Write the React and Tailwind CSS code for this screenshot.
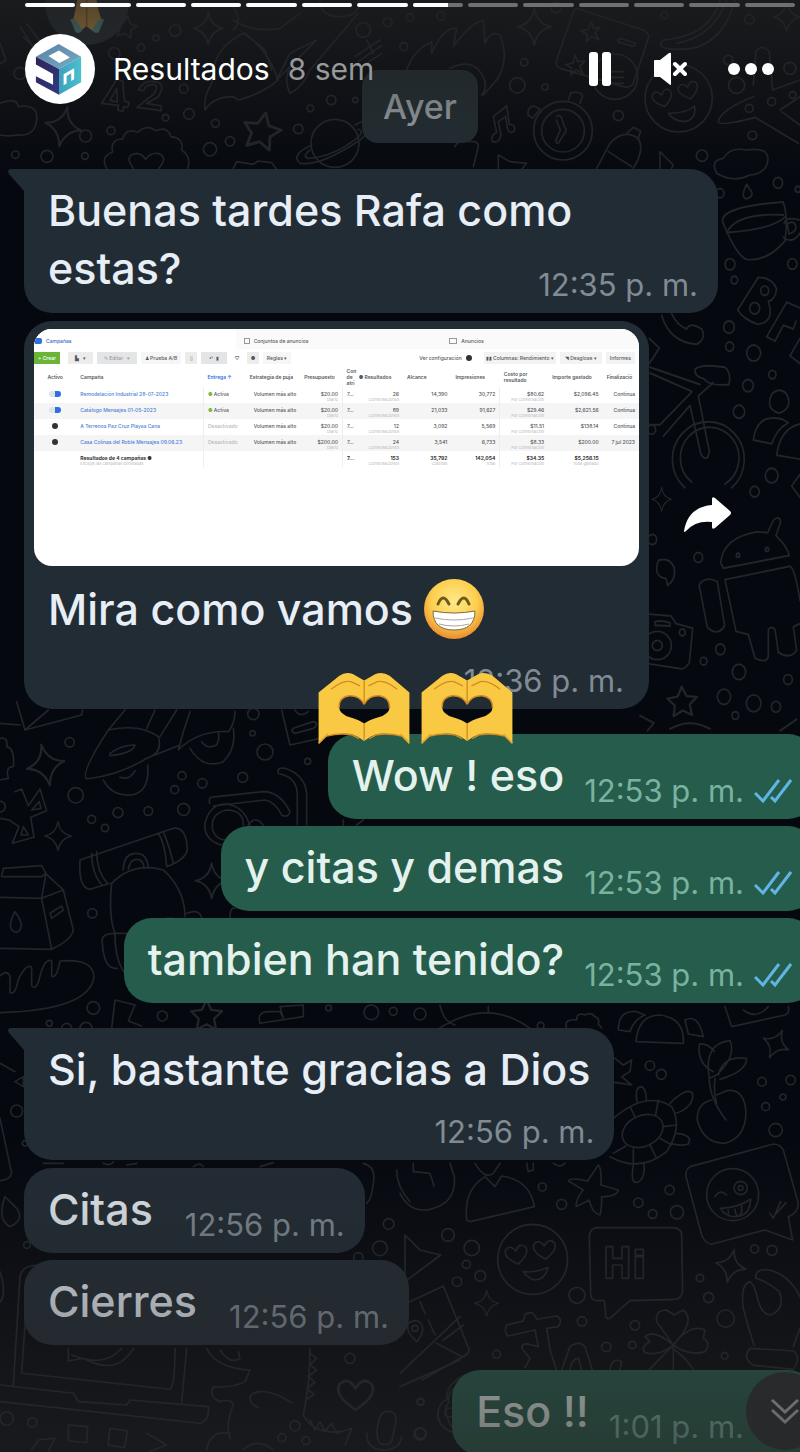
import { clsx } from 'clsx'

const segments = Array.from({ length: 14 }, (_, i) => (i < 7 ? 100 : i === 7 ? 70 : 0))

const columns = [
  { label: 'Activo', width: 'w-[7%]' },
  { label: 'Campaña', width: 'w-[21%]' },
  { label: 'Entrega ↑', width: 'w-[7%]' },
  { label: 'Estrategia de puja', width: 'w-[9%]' },
  { label: 'Presupuesto', width: 'w-[7%]' },
  { label: 'Con de atri', width: 'w-[2%]' },
  { label: '● Resultados', width: 'w-[8%]' },
  { label: 'Alcance', width: 'w-[8%]' },
  { label: 'Impresiones', width: 'w-[8%]' },
  { label: 'Costo por resultado', width: 'w-[8%]' },
  { label: 'Importe gastado', width: 'w-[9%]' },
  { label: 'Finalizació', width: 'w-[6%]' },
]

const campaigns = [
  { name: 'Remodelación Industrial 28-07-2023', on: true, budget: '$20.00', results: '26', reach: '14,390', views: '30,772', cost: '$80.62', spent: '$2,096.45', end: 'Continua' },
  { name: 'Catálogo Mensajes 01-05-2023', on: true, budget: '$20.00', results: '89', reach: '21,033', views: '91,627', cost: '$29.46', spent: '$2,621.56', end: 'Continua' },
  { name: 'A Terrenos Paz Cruz Playas Cana', on: false, budget: '$20.00', results: '12', reach: '3,092', views: '5,569', cost: '$11.51', spent: '$138.14', end: 'Continua' },
  { name: 'Casa Colinas del Roble Mensajes 09.06.23', on: false, budget: '$200.00', results: '24', reach: '3,541', views: '6,733', cost: '$8.33', spent: '$200.00', end: '7 jul 2023' },
]

const STAR5 = 'M0 -32 L10 -11 L33 -8 L16 8 L20 31 L0 20 L-21 31 L-17 8 L-33 -8 L-10 -11 Z'
const STAR4 = 'M0 -48 Q6 -8 44 0 Q8 8 0 48 Q-8 8 -44 0 Q-6 -8 0 -48 Z'
const HEART = 'M0 28 Q-42 0 -30 -20 Q-14 -36 0 -12 Q14 -36 30 -20 Q42 0 0 28 Z'

function Dots({ items }) {
  return items.map(([x, y, r]) => <circle key={`${x}-${y}`} cx={x} cy={y} r={r} />)
}

function Wallpaper() {
  return (
    <svg className="absolute inset-0 h-full w-full" viewBox="0 0 800 1452" preserveAspectRatio="xMidYMin slice" fill="none" stroke="#22252a" strokeLinejoin="round" strokeLinecap="round" aria-hidden="true">
      {/* top left: rocket, 42, planet, badge */}
      <g transform="scale(.3333)" strokeWidth="5">
        <Dots items={[[525, 92, 17], [468, 114, 9], [423, 143, 11], [343, 160, 17], [551, 266, 13], [567, 342, 16], [497, 353, 10], [646, 370, 12], [690, 424, 14], [630, 448, 20], [257, 408, 18], [333, 392, 12], [46, 464, 11], [141, 469, 18], [255, 468, 10], [895, 387, 14], [931, 325, 10], [994, 300, 14], [1066, 300, 8], [1090, 90, 22], [1163, 67, 13], [60, 220, 18]]} />
        <path d={STAR4} transform="translate(625 85)" />
        <path d={STAR4} transform="translate(190 380) rotate(12) scale(1.25)" />
        <path d={STAR5} transform="translate(786 392) rotate(12) scale(1.7)" />
        <path d={STAR5} transform="translate(378 80) rotate(10)" />
        <path d="M60 80l40 60M80 70l40 55M70 110l30 30M0 130l18 50-18 12M0 310q50-20 55 10q60-10 55 40t-60 45q-30 5-50 0" />
        <path d="M305 310l45-72 18 5 5 60 15 5-5 14-12-2-2 14-16-4 3-14zM330 302l22 4-2-40zM415 270q15-30 50-25t10 45l-35 20 45 8-2 14-72-10 50-40q20-30-5-28-20 0-25 18z" />
        <path d="M730 100Q650 140 640 210L635 250Q610 290 615 330Q640 290 700 290L715 300Q790 280 835 240Q800 140 730 100ZM700 60Q760 100 840 85L900 40M735 100l60 50 20 60M830 240l120-120-80 40-40 80M870 280Q850 240 870 200L945 125M870 280Q910 260 930 210L1075 40" />
        <circle cx="1005" cy="430" r="72" />
        <path d="M935 435Q870 465 900 490Q960 500 1080 420Q1130 380 1085 365L1065 375M930 450Q905 470 925 475Q1000 470 1070 415Q1095 395 1075 388" />
        <path d="M1065 170l75-50M1075 185l70-48M1085 200l60-40M1100 120l20 40" />
        <path d="M320 505q-20-35 18-48-8-40 30-40 10-35 45-20 28-25 55-5 35-15 45 18 40 5 32 40 30 20 18 55M400 505q-30-40 10-45 15 0 27 18 15-20 35-18 35 8 5 45M700 505l10-20 50 8 15-10 40 5 15 20" />
        <path d="M700 20q30 40 0 70M960 0q0 50 60 50t60-50" />
      </g>
      {/* top right: flames, cards, clock, smiley */}
      <g transform="translate(400 0) scale(.3333)" strokeWidth="5">
        <Dots items={[[30, 52, 11], [123, 48, 12], [11, 140, 12], [373, 187, 11], [352, 256, 23], [435, 261, 9], [655, 347, 15], [1057, 406, 13], [906, 467, 17], [1010, 256, 24], [1048, 325, 12], [1115, 305, 12], [1178, 285, 10], [793, 46, 10], [1048, 58, 14], [985, 180, 14], [468, 22, 16], [1170, 205, 18]]} />
        <path d={STAR4} transform="translate(403 80) scale(1.15)" />
        <path d={STAR4} transform="translate(1160 50) scale(.9)" />
        <path d="M20 210Q40 150 95 125L95 160Q130 80 170 85L160 140Q210 70 250 60L255 130Q270 90 300 105Q330 180 290 240L250 285M150 205q60-30 90 10 30 40 5 70" />
        <path d="M530 25L730 90Q750 100 745 115L700 250Q690 265 670 260L480 205Q465 198 470 180L520 35ZM575 65l5 20 20-3-15 17 12 20-22-10-15 15 2-22-20-10 22-3zM660 115l45 15q5 10-10 8l-40-12q-5-10 5-11zM525 165l8 20 22-2-16 17 10 20-20-10-16 14 2-20-18-10 22-5z" />
        <circle cx="645" cy="230" r="68" />
        <path d="M625 215h45M625 232h45M625 250h45M960 0Q930 110 790 120Q770 140 800 145Q960 170 1005 0M830 130Q940 110 980 0" />
        <circle cx="489" cy="392" r="88" />
        <circle cx="489" cy="392" r="64" />
        <path d="M470 350q10-10 15 5l8 25q10 10 0 20l-18 30q-10 0-6-12l12-28-12-30M505 300l8-22q30-5 35 10l-8 22M385 345q-5-20 15-28l20 10-22 28zM280 350l40-32 8 55q20 0 15 20-15 10-20-5l-6-38-22 15 8 40q-5 25-25 20-8-18 12-28z" />
        <circle cx="836" cy="295" r="101" />
        <path d={HEART} transform="translate(788 295) rotate(-15) scale(.9)" />
        <path d={HEART} transform="translate(866 272) rotate(-15) scale(.9)" />
        <path d="M805 340Q860 340 884 318Q890 360 850 365Q820 362 805 340Z" />
        <path d="M590 505L630 430Q670 385 715 415Q735 450 700 505M625 455l70 45M680 400l20-18 22 12-8 24M780 455l40 40-5 10M780 505v-50M295 505v-40l35 20 50 5-15 18M165 440q15-30 40-15 30-5 30 15l-15 60" />
        <path d="M1060 255l8-100q15-25 40 0l10 115 82-30M955 365Q960 330 1060 290M955 365Q960 380 1065 352L1195 430M1140 330l60-40M1145 335l55 40" />
        <path d="M950 520Q930 480 970 475Q990 440 1040 450Q1105 440 1104 480Q1100 520 1050 525Q1000 550 950 520Z" />
      </g>
      {/* right edge: cup, BFF, bike, android, camera */}
      <g transform="translate(640 130) scale(.3333 .3827)" strokeWidth="5">
        <Dots items={[[414, 138, 14], [474, 155, 8], [270, 351, 15], [457, 350, 14], [283, 392, 10], [267, 515, 16], [269, 566, 12], [341, 583, 21], [397, 639, 11], [324, 668, 16], [297, 736, 17], [395, 903, 19], [344, 945, 14], [175, 1117, 13], [241, 1357, 14], [191, 1388, 10], [297, 1416, 20], [444, 1436, 13], [252, 1481, 20], [341, 1498, 22], [408, 1507, 14], [286, 1530, 10], [240, 165, 12], [37, 1070, 13]]} />
        <path d="M248 240Q240 200 430 188Q445 230 435 290Q380 345 320 338Q290 330 248 240ZM260 268Q400 260 438 225M260 268Q290 215 430 222M432 245q5-20 45-10M430 280q25 20 50-10M442 245q20-10 25 5t-20 22zM320 142q-20 35 0 38 20-5 15-18z" />
        <path d="M355 385Q395 385 410 415Q405 445 385 448Q405 500 355 508Q310 495 293 470ZM440 450l40 15M440 450L380 540 405 552 430 510 460 520 468 500M480 545l-30 45 30 20M65 485Q90 555 170 560Q200 545 185 520Q150 500 140 520Q110 510 95 480" />
        <circle cx="374" cy="420" r="12" />
        <circle cx="344" cy="466" r="15" />
        <path d="M28 545l30 25-30 40M30 620L180 665M30 635l125 48M165 625q20-15 90-5 20 15 12 45-60 5-75-15-30-5-27-25M155 685L60 770H30M150 720L70 800M220 660l-45 35 33 145q-5 30-25 8L150 720" />
        <path d="M135 935A108 98 0 1 1 275 935M155 920A88 80 0 1 1 255 925" />
        <circle cx="35" cy="783" r="12" />
        <path d={STAR4} transform="translate(65 965) scale(.65)" />
        <path d={STAR5} transform="translate(127 1493) rotate(-3) scale(1.35 1.2)" />
        <path d="M395 690q25-20 45 0 20 35-22 50-43-10-23-50M340 810q10-70 85-55l20 10Q410 780 395 820ZM410 850Q420 780 480 768M410 850l70 10M480 900l-25 30 25 30" />
        <path d="M242 1130Q250 1065 350 1050L383 1052 400 1020q20-15 22 5L408 1060Q440 1085 448 1112L250 1145ZM255 1175L450 1140Q465 1145 480 1230M255 1175L288 1310 325 1318 345 1380q35 15 40-5V1305q10-10 20 0L415 1365q35 20 55-5l-10-62 20-8" />
        <path d="M180 1185q20-20 52-5l22 115q-20 30-52 5L180 1200q-5-8 0-15ZM55 1125q35-10 48 20 5 30-20 45l-5-18q-40-5-23-47ZM28 1265l65 5 15 20 50 12-10 90q-15 20-30 15L28 1395M45 1285q20-5 45 3v8l-45-2z" />
        <ellipse cx="52" cy="1347" rx="42" ry="37" />
        <ellipse cx="52" cy="1347" rx="15" ry="13" />
        <circle cx="127" cy="1313" r="9" />
        <circle cx="294" cy="1111" r="5" />
        <circle cx="381" cy="1096" r="5" />
        <path d="M0 1530l42 20-20 20M90 1565q60-30 120 0M420 1570l50-30" />
      </g>
      {/* left middle: car, bags, milk, bread */}
      <g transform="translate(0 700) scale(.3333)" strokeWidth="5">
        <Dots items={[[209, 127, 14], [227, 286, 23], [354, 338, 15], [275, 358, 12], [315, 384, 11], [445, 333, 13], [551, 328, 18], [524, 269, 12], [607, 250, 14], [546, 227, 12], [728, 232, 15], [795, 156, 24], [760, 42, 17], [758, 100, 8], [277, 640, 14], [280, 924, 19], [487, 948, 15], [923, 184, 9], [148, 970, 9], [200, 985, 15], [258, 985, 18], [986, 924, 9], [1114, 937, 22], [1180, 934, 12], [0, 320, 16]]} />
        <path d="M50 5L75 90 245 45 248 30M0 70l60 5M75 90l70-60M0 115q25-5 20 25 25 5 20 60-25 0-15 35l-25 5" />
        <path d="M325 90L375 30M440 85l25-55M325 90Q420 70 475 110Q490 160 440 175Q360 225 260 237Q240 220 325 90ZM330 160q35-25 75-25-5 25-75 32zM440 175L540 135M480 110L530 30M535 150Q550 90 570 35M535 150q60-60 150-55 20-25 20-60M310 240q25 50 85 45 55-10 48-90M360 232q30 10 45-20M570 145q40 65 100 40 40-40 30-100M605 125q15 25 45 10 10-20 5-38" />
        <path d={STAR4} transform="translate(137 195) rotate(-12) scale(1.3)" />
        <path d={STAR4} transform="translate(174 408) scale(.9)" />
        <path d={STAR4} transform="translate(635 542) scale(1.1)" />
        <path d={STAR5} transform="translate(620 945) scale(1.4)" />
        <path d="M45 275l20-8 20 50 35-50 20 65-48 20 10 60-65 18 20-50-30-20-28-5M118 305l5 20-28 5zM70 380l15 25-22 0z" />
        <path d="M240 480L520 385Q560 380 562 450Q555 480 500 500M240 480Q235 565 270 568L330 550M275 460q0 60 30 95M290 455q0 60 32 95M475 400q20 30 25 98M490 395q20 50 30 95M370 510q0-50 40-50 30 0 35 42M385 508q5-30 25-30t22 25" />
        <path d="M335 550Q400 485 490 510Q555 570 555 650M335 550Q325 650 345 700M345 700h50M345 700Q345 790 380 825M345 700q-45 0-38 30 5 80 45 75M560 640q40-15 45 15M500 655h20M690 655q0-35 15-30" />
        <path d="M5 530L10 505 125 497 138 520 125 530 5 530M138 522L190 570 125 595 138 520M0 592L125 595 155 748 0 745M190 570L220 690Q215 720 155 748M45 635q-30 55 5 62 30-15-5-62M150 640l35-22 5 12-35 25z" />
        <path d="M0 828q20-20 30 0v50q15 10 25-40 25-50 40-35v55q15 15 25-30 15-55 35-45v45q15 10 25-45Q280 775 282 830 270 930 0 938M345 900l60 15-20 48 40 15M345 900l-10 85M780 970q-10-30 20-35h40l10 20-10-35 70-5v35l-130 20" />
        <path d="M845 30l25 105 100-22M880 85l60-20q20 5 0 20l-55 15q-15-5-5-15zM885 30q15 25 40 5M835 220q-5-20 20-15 60 20 65 75v95M840 222q50 10 52 60v92M630 310q-10-20 20-20L790 275q50 0 80 60-5 20-25 10-20-40-50-45L640 318M665 435Q610 420 615 370 630 310 680 312 735 320 750 380M730 375q0-45-50-45-50 10-42 60 10 30 40 30" />
        <path d="M745 375q20-30 45 0M1030 375v-15M1070 375l20-15" />
      </g>
      {/* bottom right: turtle, plant, chat card, smiley, clover */}
      <g transform="translate(400 1000) scale(.3333)" strokeWidth="5">
        <Dots items={[[60, 42, 18], [422, 77, 10], [750, 197, 14], [784, 223, 15], [1086, 245, 13], [1172, 240, 14], [1149, 291, 9], [1097, 320, 12], [1127, 390, 20], [427, 561, 12], [485, 613, 15], [715, 608, 14], [758, 642, 13], [809, 570, 14], [831, 637, 20], [144, 705, 19], [215, 744, 23], [199, 793, 12], [241, 828, 16], [171, 845, 14], [531, 886, 24], [546, 964, 14], [619, 1041, 14], [705, 976, 14], [697, 1035, 11], [900, 834, 11], [926, 893, 15], [977, 956, 26], [974, 1067, 10], [1064, 747, 12], [1116, 751, 15], [290, 1063, 12], [61, 1205, 10], [60, 1302, 18], [149, 1238, 14]]} />
        <path d="M120 15q10 50 45 60M110 90q150-100 280-5M265 20v20M500 85q-10-30 30-25 0-25 25-15 20-10 30 5 15 5 10 22l10 12M655 90q0-60 55-55l25 10Q700 60 690 95ZM708 125Q715 45 780 45Q855 55 850 130ZM855 60q40-20 55 50l-45-8zM975 20l20 60 160-35q15-5 10-25M1030 30q40 30 75-10" />
        <path d={STAR4} transform="translate(1128 132) rotate(25) scale(.95)" />
        <path d={STAR4} transform="translate(992 798) rotate(12) scale(1.05)" />
        <path d={STAR4} transform="translate(260 910) scale(.8)" />
        <path d="M645 175l25 20 25-15-5 35-25 15 30 25-50-8" />
        <path d="M940 215Q890 190 898 132Q925 130 943 155M928 235Q910 130 990 122Q1010 170 950 225ZM955 225Q970 165 1040 175Q1040 215 960 238M928 235q0 60 50 125M945 235q-5 40 5 75M935 300Q890 310 892 360 910 430 975 430 1035 415 1038 340 1035 265 980 272L950 285" />
        <path d="M640 355Q740 270 815 320Q850 380 800 455Q720 520 630 470" />
        <ellipse cx="728" cy="393" rx="64" ry="46" transform="rotate(-25 728 393)" />
        <path d="M712 308q-10-45 12-48 15 5 15 40M810 310q50-50 68-30 5 40-50 60M830 400q50 5 35 32-20 8-55-2M700 495q-10 55 12 52 25-10 20-60M690 320l15 30M775 300l-8 45M830 375l-42 5M815 435l-35-20M770 475l-20-40M700 495v-48M640 460l38-22" />
        <path d="M870 500L1120 432Q1140 432 1150 450L1195 610Q1195 640 1165 650L1178 720 1095 690 935 733Q915 730 905 705L858 530Q855 510 870 500ZM1110 640l10 15 22-50M1130 640l28-32" />
        <circle cx="998" cy="584" r="78" />
        <circle cx="1022" cy="564" r="20" />
        <circle cx="1022" cy="564" r="7" />
        <path d="M945 590q15-25 35-5M962 625Q1010 625 1052 598Q1050 650 1005 650Q975 650 962 625ZM985 630v15M1005 628q5 35 20 10V615" />
        <path d="M0 580Q30 640 90 628Q170 610 163 530L150 490M40 490v25l50 5 12 38M225 490q30 50 55 30l20-30M380 490l5 25 15-5v-20M460 490q20 15 35 0M200 660Q190 570 255 530L285 560 305 528Q390 540 403 620L210 665ZM595 495q10 10 8 60l52 15q-5 20-50 20 0 40-5 55-25-5-32-45l-40 20q0-25 22-50l-45-27q5-12 58 0z" />
        <circle cx="398" cy="778" r="105" />
        <path d={HEART} transform="translate(350 765) rotate(-10)" />
        <path d={HEART} transform="translate(434 750) rotate(-5)" />
        <path d="M370 815Q405 820 444 802Q435 840 405 840Q385 835 370 815Z" />
        <path d="M590 683H820Q845 685 845 705L848 870Q845 898 825 898L690 902 630 955Q615 960 617 940L613 902H590Q572 900 572 880L568 710Q570 685 590 683Z" />
        <path d="M618 740h20v35h28v-35h20v95h-20v-40h-28v40h-20zM706 770h24v65h-24zM706 748h24v18h-24z" />
        <path d="M15 705L60 750 122 765 15 845ZM20 910L130 858 208 1050Q205 1065 180 1075L65 1140M0 1120L180 950M60 905l15 35M85 960l20 45M0 1160L180 1080M130 1020l60-45M110 1030l75 40M50 1025q-35-30-25-55 30-20 42 10 5 20-17 45Z" />
        <circle cx="45" cy="985" r="9" />
        <path d="M320 975l50-12 5-20q25-15 35 15l60-10q20 10 5 32l-35 5 10 65 20 62M320 975q-10 20 5 33l80-18 10 50-20-5q-30-10-30 10l25 30-15 28M485 1110l25-70q25-20 45 0l22 70M510 1110q5-35 25-35l10 35M630 1110q5-40 35-25l-5 25" />
        <path d="M820 1035L770 965Q765 930 800 930L822 945 850 930Q890 960 820 1035ZM820 1035Q870 970 915 990L910 1015Q935 1030 915 1055Q870 1070 820 1035ZM820 1035Q760 985 735 1010L750 1025Q720 1040 735 1058Q780 1070 820 1035L745 1112M820 1035q0 50 0 75M825 1050q40 30 55 60" />
        <path d="M1068 835q-5-30 40-25 60 15 92 80M1068 835q25 5 70 40 20 50-25 70-25 0-38-40-10-50-25-60-30 10-20 80 15 60 32 110M1200 985l-20 55M1050 1045l130 8q25 20 0 55l-120-12q-35-25-10-51" />
        <path d="M165 1300q-60-20-50-70 10-30 25-30 0-40 25-55 15-20 55-25M185 1160q-40 0-40 50-20 20 10 70" />
      </g>
      {/* bottom left: laptop, heart, microphone */}
      <g transform="translate(0 1000) scale(.3333)" strokeWidth="5">
        <Dots items={[[50, 333, 18], [81, 735, 10], [1166, 672, 16], [1140, 745, 22], [1075, 772, 14], [1050, 1075, 15], [1262, 1206, 10], [1262, 1300, 16], [885, 1278, 15], [846, 1313, 12], [918, 1322, 12], [20, 1256, 20], [97, 1268, 14], [75, 430, 8]]} />
        <path d="M0 355L35 520Q30 540 0 542M15 590q-25 70 15 90 45-20 20-55l-35-35M0 190l45 25M45 245l25-15v30zM0 815q25 80-10 100M40 1155L60 830Q65 795 120 795M85 830L65 1120 510 1168Q525 1160 525 1045M545 1208L560 1045M0 1155L220 1180 235 1205 380 1215 390 1200 625 1220Q630 1260 600 1270L0 1205M205 1045v38l45-8q100 55 150-30M215 1065q100 40 150-20" />
        <path d="M620 1045q30 60 130 65l-15 35q-40 20-95 15-15 30 20 45 35-10 40 10-25 60-10 100M660 1050q30 45 60 25l-5-20M875 1208q-80-50-120-25-15 25 20 40M620 1350q10-60 70-50M730 1350q40-40 90 0" />
        <path d="M930 1045q0 110-20 200 30 60 115 50M930 1060l20 15-20 18 20 18-25 18 20 18-25 18 22 18-25 18M930 1260l15 30 15-25 15 30 20-25 15 30 45-15-20 50" />
        <path d={HEART} transform="translate(1067 1185) scale(1.6)" />
        <path d="M1140 1250q10-20 35-15 20 10 10 40l-10 50q-20 20-40 0-10-30 5-75M1100 1300q0 50 50 50t55-40M205 1275l58 5-3 48-55-5zM330 1285l52 8-8 50-50-8zM440 1300l60 35-50 20M95 1350l20-30 50-5-20 40" />
        <path d="M130 490h60M310 490q20 10 30-5M380 495l30-5M580 500q20-15 30 0M780 500l40-12M1090 490q40 10 30 60-5 50-20 60M1190 510q0 50 40 95" />
      </g>
    </svg>
  )
}

function Logo() {
  return (
    <svg viewBox="75 102 212 212" className="size-[70px] shrink-0 rounded-full bg-white" role="img" aria-label="Resultados">
      <defs>
        <linearGradient id="roof" x1="0" y1="0" x2="1" y2="1">
          <stop offset="0" stopColor="#5a7fa6" />
          <stop offset="1" stopColor="#77adc4" />
        </linearGradient>
        <linearGradient id="side" x1="0" y1="0" x2="1" y2="1">
          <stop offset="0" stopColor="#2d2458" />
          <stop offset="1" stopColor="#303a80" />
        </linearGradient>
        <linearGradient id="front" x1="0" y1="0" x2="1" y2="0">
          <stop offset="0" stopColor="#3d9fbd" />
          <stop offset="1" stopColor="#4cc0cd" />
        </linearGradient>
      </defs>
      <path fill="url(#roof)" fillRule="evenodd" d="M177 132L245 171L178 208L108 171ZM178 152L146 169L179 190L211 173Z" />
      <path fill="url(#side)" d="M108 171L178 208V286L108 248V230L160 256V223L108 194Z" />
      <path fill="url(#front)" fillRule="evenodd" d="M178 208L245 171V248L178 286ZM192 224V257L201 252V229L215 221V244L224 239V206Z" />
    </svg>
  )
}

function GrinEmoji() {
  return (
    <svg viewBox="0 0 62 62" className="size-[62px] shrink-0" role="img" aria-label="😁">
      <defs>
        <radialGradient id="face" cx=".5" cy=".38" r=".64">
          <stop offset="0" stopColor="#ffe98a" />
          <stop offset=".6" stopColor="#fccf4e" />
          <stop offset="1" stopColor="#e9862c" />
        </radialGradient>
      </defs>
      <circle cx="31" cy="31" r="30" fill="url(#face)" />
      <path d="M15 26q5-12 11 0M35 26q6-12 11 0" fill="none" stroke="#6f5a1e" strokeWidth="3" strokeLinecap="round" />
      <path d="M10 33q21 4 42 0 0 19-21 19T10 33Z" fill="#fff" stroke="#7b6a3e" strokeWidth="1" />
      <path d="M12 40q19 4 38 0M16 46q15 4 30 0" fill="none" stroke="#a9a69f" strokeWidth="1" />
    </svg>
  )
}

function HeartHands() {
  return (
    <svg viewBox="66 336 277 218" className="h-[72px] w-[92px]" role="img" aria-label="🫶">
      <path
        fill="#fac943"
        fillRule="evenodd"
        d="M67 398L130 347Q150 334 172 343L205 362L238 343Q260 334 282 347L342 398V552L318 530Q280 520 243 524Q225 530 205 545Q185 530 166 524Q130 520 92 530L67 552ZM205 434Q192 407 160 408Q128 412 129 444Q132 464 162 473Q192 482 205 492Q218 482 248 473Q280 464 282 444Q282 412 250 408Q218 407 205 434Z"
      />
      <path d="M205 362V434M205 492V545M205 434Q192 407 160 408Q128 412 129 444M205 434Q218 407 250 408Q282 412 282 444M105 388Q140 360 165 365L192 378M305 388Q270 360 245 365L218 378M92 530Q130 520 166 526L190 538M318 530Q280 520 243 526L220 538" fill="none" stroke="#d08b22" strokeWidth="4" />
      <path d="M67 552L95 524M342 552L315 524" stroke="#e5a32c" strokeWidth="5" />
    </svg>
  )
}

function PrayEmoji() {
  return (
    <svg viewBox="190 0 114 105" className="h-[35px] w-[38px]" role="img" aria-label="🙏">
      <path fill="#e0a743" d="M218 0Q212 40 205 62L228 95L245 82L264 95L290 62Q280 35 275 0Z" />
      <path d="M246 0V82" stroke="#a8702a" strokeWidth="5" />
      <path fill="#5f9f9c" d="M197 62q10-8 20 6l16 26q-8 12-20 6zM298 62q-10-8-20 6l-16 26q8 12 20 6z" />
    </svg>
  )
}

function Checks() {
  return (
    <svg viewBox="0 0 38 26" className="h-[26px] w-[38px] shrink-0" fill="none" stroke="#5fb6e2" strokeWidth="3" aria-hidden="true">
      <path d="M1 15l8 8L25 2M17 19l4 4L37 2" />
    </svg>
  )
}

function Tail() {
  return (
    <svg viewBox="0 0 16 22" className="absolute top-0 right-full h-[22px] w-4 fill-[#222c35]" aria-hidden="true">
      <path d="M16 0H2Q-1 1 1 5L16 22Z" />
    </svg>
  )
}

function Time({ children, out, className }) {
  return (
    <time className={clsx('shrink-0 text-[31px] leading-[40px] whitespace-nowrap', out ? 'text-[#79b3a0]' : 'text-[#818b94]', className)}>
      {children}
    </time>
  )
}

function Incoming({ children, className }) {
  return <div className={clsx('relative rounded-[28px] bg-[#222c35] pt-3 pr-5 pb-2 pl-6 text-[#e8eef6]', className)}>{children}</div>
}

function Outgoing({ text, time, children }) {
  return (
    <div className="relative -mr-4 flex items-end gap-5 self-end rounded-[28px] bg-[#265c4c] pt-3 pr-6 pb-2 pl-6 text-[#e4f2ee]">
      {children}
      <p className="mb-[7px]">{text}</p>
      <div className="flex items-center gap-[10px]">
        <Time out>{time}</Time>
        <Checks />
      </div>
    </div>
  )
}

function Sub({ children }) {
  return <span className="block text-[4px] leading-[6px] font-normal text-[#b5b8bc]">{children}</span>
}

function CampaignShot() {
  return (
    <div className="h-[237px] overflow-hidden rounded-[18px] bg-white text-[5px] leading-[6px] font-medium text-[#55585c]">
      <div className="flex h-5 items-center bg-[#fafafa]">
        <div className="flex h-full w-1/3 items-center gap-1 bg-white pt-1 text-[#3568c8]">
          <span className="h-1.5 w-2 rounded-xs bg-[#2f6fe0]" />
          Campañas
        </div>
        <div className="flex w-1/3 items-center gap-1 pt-1 pl-2">
          <span className="size-1.5 border border-[#999]" />
          Conjuntos de anuncios
        </div>
        <div className="flex flex-1 items-center gap-1 pt-1 pl-3">
          <span className="h-1.5 w-2 border border-[#999]" />
          Anuncios
        </div>
      </div>
      <div className="flex h-[18px] items-center gap-1 pr-1">
        <span className="h-3 w-[26px] bg-[#6ab436] text-center leading-[12px] text-white">+ Crear</span>
        <span className="ml-1 h-3 w-[25px] bg-[#ececed] text-center leading-[12px]">▙ &nbsp; ▾</span>
        <span className="h-3 w-[40px] bg-[#e4e5e7] text-center leading-[12px] text-[#999]">✎ Editar &nbsp; ▾</span>
        <span className="h-3 w-[40px] bg-[#f6f6f6] text-center leading-[12px]">♟ Prueba A/B</span>
        <span className="size-3 bg-[#ececed] text-center leading-[12px]">▯</span>
        <span className="h-3 w-[26px] bg-[#e4e5e7] text-center leading-[12px]">↶ &nbsp; ▮</span>
        <span className="size-3 text-center leading-[12px]">♡</span>
        <span className="size-3 bg-[#ececed] text-center leading-[12px]">●</span>
        <span className="h-3 w-7 bg-[#f6f6f6] text-center leading-[12px]">Reglas ▾</span>
        <span className="ml-auto">Ver configuración</span>
        <span className="mr-2 size-1.5 rounded-full bg-[#333]" />
        <span className="h-3 w-[72px] bg-[#f3f3f4] text-center leading-[12px]">▮▮ Columnas: Rendimiento ▾</span>
        <span className="h-3 w-[42px] bg-[#f3f3f4] text-center leading-[12px]">◥ Desglose ▾</span>
        <span className="h-3 bg-[#f3f3f4] px-1 leading-[12px]">Informes</span>
      </div>
      <table className="w-full table-fixed text-right">
        <thead>
          <tr className="h-5 text-left">
            {columns.map(c => (
              <th key={c.label} className={clsx('px-1 font-semibold first:text-center', c.width, c.label.startsWith('Entrega') && 'text-[#2f6fe0]')}>
                {c.label}
              </th>
            ))}
          </tr>
        </thead>
        <tbody>
          {campaigns.map(c => (
            <tr key={c.name} className="h-4 align-top even:bg-[#f5f5f6] *:px-1 *:pt-1">
              <td>
                <span className={clsx('mx-auto block h-1.5 rounded-full', c.on ? 'w-3 border-r-6 border-[#2f6fe0] bg-[#dfe3ea]' : 'w-1.5 bg-[#333]')} />
              </td>
              <td className="truncate text-left text-[#4a7fd6]">{c.name}</td>
              <td className="border-l border-[#eee] text-left">{c.on ? <><span className="text-[#7ab648]">●</span> Activa</> : <span className="text-[#b5b8bc]">Desactivado</span>}</td>
              <td className="whitespace-nowrap">Volumen más alto</td>
              <td>{c.budget}<Sub>Diario</Sub></td>
              <td className="border-l border-[#eee] text-left">7…</td>
              <td>{c.results}<Sub>Conversaciones</Sub></td>
              <td>{c.reach}</td>
              <td>{c.views}</td>
              <td className="border-l border-[#eee]">{c.cost}<Sub>Por conversación</Sub></td>
              <td>{c.spent}</td>
              <td>{c.end}</td>
            </tr>
          ))}
          <tr className="h-4 align-top font-bold text-[#333] *:px-1 *:pt-1">
            <td />
            <td className="text-left">Resultados de 4 campañas ●<Sub>Excluye las campañas eliminadas</Sub></td>
            <td className="border-l border-[#eee]" />
            <td />
            <td />
            <td className="border-l border-[#eee] text-left">7…</td>
            <td>153<Sub>Conversaciones</Sub></td>
            <td>35,792<Sub>Cuentas</Sub></td>
            <td>142,054<Sub>Total</Sub></td>
            <td className="border-l border-[#eee]">$34.35<Sub>Por conversación</Sub></td>
            <td>$5,256.15<Sub>Total gastado</Sub></td>
            <td />
          </tr>
        </tbody>
      </table>
    </div>
  )
}

export default function App() {
  return (
    <div className="relative h-screen overflow-hidden bg-[#05080f] font-['Inter','Liberation_Sans',sans-serif]">
      <Wallpaper />

      {/* Chat */}
      <main className="relative flex flex-col pt-[70px] pl-6 text-[43px] leading-[58px] font-medium [&_time]:font-normal">
        <div className="absolute -top-10 left-[45px] flex h-[85px] w-[84px] items-end justify-center rounded-full bg-[#222c35] pb-[11px]">
          <PrayEmoji />
        </div>

        <p className="ml-4 self-center rounded-2xl bg-[#222e33] px-[21px] py-2 text-[34px] leading-[57px] text-[#a5adb2]">Ayer</p>

        <Incoming className="mt-[26px] mr-6 flow-root max-w-[694px] rounded-tl-none">
          <Tail />
          <span>Buenas tardes Rafa como </span>
          <span>estas?</span>
          <Time className="float-right mt-[26px]">12:35 p. m.</Time>
        </Incoming>

        <div className="mt-2 flex items-center gap-[35px]">
          <div className="w-[625px] rounded-[28px] bg-[#222c35] px-[10px] py-2 text-[#e8eef6]">
            <CampaignShot />
            <div className="mt-3 flex items-center gap-[10px] pl-[14px]">
              Mira como vamos <GrinEmoji />
            </div>
            <div className="mt-[21px] mr-[15px] flex justify-end">
              <Time>12:36 p. m.</Time>
            </div>
          </div>
          <button type="button" aria-label="Compartir">
            <svg viewBox="0 0 48 36" className="h-9 w-12 fill-white">
              <path d="M0 34Q4 10 28 8V2Q28-1 31 1L46 14Q48 16 46 18L31 31Q28 33 28 30V25Q12 23 2 34Q0 36 0 34Z" />
            </svg>
          </button>
        </div>

        <div className="mt-[25px] flex flex-col gap-[7px]">
          <Outgoing text="Wow ! eso" time="12:53 p. m.">
            <div className="absolute -top-[62px] -left-[10px] flex gap-[11px]">
              <HeartHands />
              <HeartHands />
            </div>
          </Outgoing>
          <Outgoing text="y citas y demas" time="12:53 p. m." />
          <Outgoing text="tambien han tenido?" time="12:53 p. m." />
        </div>

        <Incoming className="mt-[25px] flex flex-col self-start rounded-tl-none">
          <Tail />
          <p className="pr-1">Si, bastante gracias a Dios</p>
          <Time className="mt-[14px] self-end">12:56 p. m.</Time>
        </Incoming>
        <Incoming className="mt-2 flex items-end gap-8 self-start">
          <p className="mb-[7px]">Citas</p>
          <Time>12:56 p. m.</Time>
        </Incoming>
        <Incoming className="mt-[7px] flex items-end gap-8 self-start">
          <p className="mb-[7px]">Cierres</p>
          <Time>12:56 p. m.</Time>
        </Incoming>

        <div className="mt-[25px] flex flex-col">
          <Outgoing text="Eso !!" time="1:01 p. m." />
        </div>
      </main>

      <button type="button" aria-label="Ir al final" className="absolute -right-6 bottom-[2px] flex size-[78px] items-center justify-center rounded-full bg-[#2a2d31]">
        <svg viewBox="0 0 30 30" className="size-[30px]" fill="none" stroke="#b4b9be" strokeWidth="3">
          <path d="M2 4l13 12L28 4M2 14l13 12L28 14" />
        </svg>
      </button>

      <div className="pointer-events-none absolute inset-x-0 top-0 h-[180px] bg-linear-to-b from-[#222222]/75 to-transparent" />
      <div className="pointer-events-none absolute inset-x-0 bottom-0 h-[320px] bg-linear-to-t from-[#262626]/60 to-transparent" />

      {/* Story controls */}
      <header className="absolute inset-x-0 top-0 pt-[3px]">
        <div className="flex gap-[5px] pr-[5px] pl-[25px]">
          {segments.map((fill, i) => (
            <div key={i} className="h-1 flex-1 overflow-hidden rounded-full bg-[#707070]">
              <div className="h-full bg-white" style={{ width: `${fill}%` }} />
            </div>
          ))}
        </div>
        <div className="mt-[27px] flex items-center pr-[26px] pl-[25px] text-[30px] leading-[40px] text-white">
          <Logo />
          <h1 className="ml-[18px]">Resultados</h1>
          <span className="ml-[18px] text-[#98999b]">8 sem</span>
          <div className="ml-auto flex items-center">
            <button type="button" aria-label="Pausar" className="mr-[43px] flex gap-1">
              <span className="h-[34px] w-[9px] rounded-[3px] bg-white" />
              <span className="h-[34px] w-[9px] rounded-[3px] bg-white" />
            </button>
            <button type="button" aria-label="Activar sonido" className="mr-[41px]">
              <svg viewBox="0 0 33 34" className="h-[34px] w-[33px] fill-white">
                <path d="M1 8H6L15 1Q17 0 17 2V32Q17 34 15 32L6 25H1Q0 25 0 24V9Q0 8 1 8Z" />
                <path d="M21 12l10 10M31 12L21 22" stroke="#fff" strokeWidth="4" strokeLinecap="round" />
              </svg>
            </button>
            <button type="button" aria-label="Más opciones" className="flex gap-[5px]">
              <span className="size-3 rounded-full bg-white" />
              <span className="size-3 rounded-full bg-white" />
              <span className="size-3 rounded-full bg-white" />
            </button>
          </div>
        </div>
      </header>
    </div>
  )
}
